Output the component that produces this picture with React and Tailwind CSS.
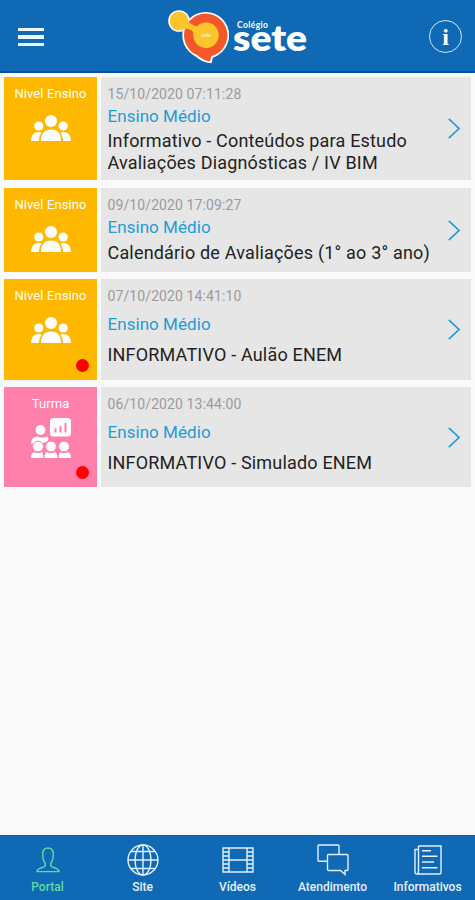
import { useState } from 'react';

const notices = [
  {
    id: 1,
    kind: 'Nivel Ensino',
    date: '15/10/2020 07:11:28',
    group: 'Ensino Médio',
    title: ['Informativo - Conteúdos para Estudo', 'Avaliações Diagnósticas / IV BIM'],
    unread: false,
    size: 'h-[103px] mb-2',
    groupGap: 'mt-[4px]',
    titleGap: 'mt-[4px]',
  },
  {
    id: 2,
    kind: 'Nivel Ensino',
    date: '09/10/2020 17:09:27',
    group: 'Ensino Médio',
    title: ['Calendário de Avaliações (1° ao 3° ano)'],
    unread: false,
    size: 'h-[84px] mb-[7px]',
    groupGap: 'mt-[4px]',
    titleGap: 'mt-[5px]',
  },
  {
    id: 3,
    kind: 'Nivel Ensino',
    date: '07/10/2020 14:41:10',
    group: 'Ensino Médio',
    title: ['INFORMATIVO - Aulão ENEM'],
    unread: true,
    size: 'h-[101px] mb-[7px]',
    groupGap: 'mt-[10px]',
    titleGap: 'mt-[10px]',
  },
  {
    id: 4,
    kind: 'Turma',
    date: '06/10/2020 13:44:00',
    group: 'Ensino Médio',
    title: ['INFORMATIVO - Simulado ENEM'],
    unread: true,
    size: 'h-[100px]',
    groupGap: 'mt-[10px]',
    titleGap: 'mt-[10px]',
  },
];

function Logo() {
  return (
    <svg width="142" height="60" viewBox="0 0 142 60">
      {/* white outline behind the whole shape */}
      <g fill="#fff">
        <circle cx="11" cy="13" r="10.8" />
        <circle cx="37.7" cy="27.3" r="23.4" />
        <path d="M28 47 L45.5 47.5 L43.5 55.3 Q33 54.5 26 47Z" />
      </g>
      <circle cx="37.7" cy="27.3" r="21.7" fill="#f4582a" />
      <path d="M29 46.5 L43.5 47 L42 53.6 Q34.5 52.5 29 46.5Z" fill="#f4582a" />
      {/* neck joining the two yellow circles */}
      <path d="M17 8.5 Q20 15 27 18 Q31 19 35 16 L28 33 Q27 25 23 22 Q19 20 12 21Z" fill="#fdc52c" />
      <circle cx="11" cy="13" r="9.4" fill="#fdc52c" />
      <circle cx="38" cy="27.3" r="12.7" fill="#fdc52c" />
      <text x="33" y="29" fontSize="5" fontWeight="700" fill="#fff3b0" textLength="10" className="font-['Roboto',sans-serif]">
        sete
      </text>
      <text x="69" y="20" fontSize="8.5" fontWeight="700" fill="#fff" textLength="31" className="font-['Lato',sans-serif]">
        Colégio
      </text>
      <text x="65" y="43" fontSize="36.5" fontWeight="800" fill="#fff" textLength="74" lengthAdjust="spacingAndGlyphs" className="font-['Lato',sans-serif]">
        sete
      </text>
    </svg>
  );
}

function GroupIcon() {
  return (
    <svg width="40" height="26" viewBox="0 0 40 26" fill="#fff">
      <circle cx="20" cy="6" r="6" />
      <circle cx="7.8" cy="11" r="4.6" />
      <circle cx="32.2" cy="11" r="4.6" />
      <path d="M10 26 Q10 14.5 20 14.5 Q30 14.5 30 26Z" />
      <path d="M0 26 Q.3 17 7.8 17 Q9.4 17 10.5 17.5 Q8 21 7.8 26Z" />
      <path d="M40 26 Q39.7 17 32.2 17 Q30.6 17 29.5 17.5 Q32 21 32.2 26Z" />
    </svg>
  );
}

function ClassIcon() {
  return (
    <svg width="40" height="40" viewBox="0 0 40 40" fill="#fff">
      <rect x="19" y="0" width="21" height="18.5" rx="3.5" />
      <path d="M24.5 10.5v4M29.5 8v6.5M34.5 5v9.5" stroke="#ff80ab" strokeWidth="2" />
      <circle cx="9.5" cy="12" r="4.9" />
      <path d="M0 26 Q0 19 6 18.5 Q12 20.5 16.5 18.5 Q18.5 21 16 23.5 L12 25 H3Z" />
      <g stroke="#ff80ab" strokeWidth="1">
        <circle cx="7" cy="28.5" r="5.4" />
        <circle cx="20" cy="28.5" r="5.4" />
        <circle cx="33" cy="28.5" r="5.4" />
      </g>
      <path d="M0 40 Q0 35 3 34 Q7 36.5 11 34 Q12.2 35 12.2 40Z" />
      <path d="M13.4 40 Q13.5 35 16 34 Q20 36.5 24 34 Q26.4 35 26.6 40Z" />
      <path d="M27.8 40 Q27.8 35 29 34 Q33 36.5 37 34 Q40 35 40 40Z" />
    </svg>
  );
}

function PersonIcon() {
  return (
    <svg width="24" height="26" viewBox="0 0 24 26" fill="none" stroke="currentColor" strokeWidth="1.4">
      <path d="M9.3 16.5 Q6.6 13 6.7 7 Q6.8 1 12 1 Q17.2 1 17.3 7 Q17.4 13 14.7 16.5 V18.5 Q15.2 20 20 21.3 Q23 22.3 23 24.6 H1 Q1 22.3 4 21.3 Q8.8 20 9.3 18.5Z" />
    </svg>
  );
}

function GlobeIcon() {
  return (
    <svg width="32" height="32" viewBox="0 0 32 32" fill="none" stroke="currentColor" strokeWidth="1.4">
      <circle cx="16" cy="16" r="15" />
      <ellipse cx="16" cy="16" rx="8" ry="15" />
      <path d="M16 1v30M1 16h30M4 7.5h24M4 24.5h24" />
    </svg>
  );
}

function FilmIcon() {
  return (
    <svg width="32" height="26" viewBox="0 0 32 26" fill="none" stroke="currentColor" strokeWidth="1.4">
      <path d="M1 1h30v24H1zM7 1v24M25 1v24M7 13h18" />
      <path d="M1 5h6M1 9h6M1 13h6M1 17h6M1 21h6M25 5h6M25 9h6M25 13h6M25 17h6M25 21h6" />
    </svg>
  );
}

function ChatIcon() {
  return (
    <svg width="32" height="32" viewBox="0 0 32 32" fill="none" stroke="currentColor" strokeWidth="1.4">
      <path d="M10 17.3H2Q1 17.3 1 16.3V2Q1 1 2 1H21Q22 1 22 2V10" />
      <path d="M11.5 10.5H30Q31 10.5 31 11.5V25.5Q31 26.5 30 26.5H28V30.5L23.5 26.5H11.5Q10.5 26.5 10.5 25.5V11.5Q10.5 10.5 11.5 10.5Z" />
    </svg>
  );
}

function NewsIcon() {
  return (
    <svg width="28" height="30" viewBox="0 0 28 30" fill="none" stroke="currentColor" strokeWidth="1.4">
      <path d="M4.5 1h22.5v26.5Q27 29 25.5 29H3Q1 29 1 27V4.5H4.5M4.5 1V26.5Q4.5 29 2.8 29" />
      <path d="M8 5.8h9M8 11.3h15.5M8 17h12M8 22.8h15.5" />
    </svg>
  );
}

const tabs = [
  { label: 'Portal', icon: PersonIcon },
  { label: 'Site', icon: GlobeIcon },
  { label: 'Vídeos', icon: FilmIcon },
  { label: 'Atendimento', icon: ChatIcon },
  { label: 'Informativos', icon: NewsIcon },
];

function NoticeCard({ notice }) {
  const isClass = notice.kind === 'Turma';

  return (
    <li className={`flex gap-[4px] ${notice.size}`}>
      <div className={`relative w-[93px] shrink-0 flex flex-col items-center pt-[9px] ${isClass ? 'bg-[#ff80ab]' : 'bg-[#ffb800]'}`}>
        <span className="h-4 text-[13px] leading-4 tracking-[0.1px] text-white whitespace-nowrap">{notice.kind}</span>
        <div className={isClass ? 'mt-[6px]' : 'mt-[13px]'}>
          {isClass ? <ClassIcon /> : <GroupIcon />}
        </div>
        {notice.unread && <span className="absolute right-[8px] bottom-[8px] size-[13px] rounded-full bg-[#ff0000]" />}
      </div>
      <button className="flex-1 flex items-center justify-between bg-[#e6e6e6] pl-[6.5px] pr-[11px] text-left">
        <div className="self-start pt-[9px] whitespace-nowrap">
          <p className="text-[14px] leading-4 tracking-[0.1px] text-[#9b9b9b]">{notice.date}</p>
          <p className={`text-[17px] leading-5 tracking-[0.05px] text-[#219cd8] ${notice.groupGap}`}>{notice.group}</p>
          <p className={`text-[18px] leading-[21.5px] tracking-[0.18px] text-[#222] ${notice.titleGap}`}>
            {notice.title.map((line) => (
              <span key={line} className="block">{line}</span>
            ))}
          </p>
        </div>
        <svg width="12" height="21" viewBox="0 0 12 21" fill="none" stroke="#219cd8" strokeWidth="1.7">
          <path d="M.8.8 L11 10.5 L.8 20.2" />
        </svg>
      </button>
    </li>
  );
}

export default function App() {
  const [active, setActive] = useState('Portal');

  return (
    <div className="h-[900px] w-full flex flex-col bg-[#fafafa] font-['Roboto',sans-serif]">
      <header className="h-[73px] shrink-0 flex items-center justify-between bg-[#0f69b4] border-b-2 border-[#07539b] pl-[18px] pr-[13px] text-white">
        <button className="flex flex-col gap-[4px] pt-[3px]">
          <span className="block h-[3.5px] w-[26px] bg-[#eef7ff]" />
          <span className="block h-[3.5px] w-[26px] bg-[#eef7ff]" />
          <span className="block h-[3.5px] w-[26px] bg-[#eef7ff]" />
        </button>
        <div className="pt-[5px] pl-[4px]">
          <Logo />
        </div>
        <button className="mt-[2px] size-[33px] rounded-full border-[1.5px] border-[#d5ebfb] flex items-center justify-center">
          <span className="font-['Liberation_Serif',serif] font-bold text-[24px] leading-[30px]">i</span>
        </button>
      </header>

      <ul className="flex-1 px-[4px] pt-[4px]">
        {notices.map((notice) => (
          <NoticeCard key={notice.id} notice={notice} />
        ))}
      </ul>

      <nav className="h-[65px] shrink-0 grid grid-cols-5 bg-[#0f69b4] border-t border-[#0a5da6]">
        {tabs.map(({ label, icon: Icon }) => (
          <button
            key={label}
            onClick={() => setActive(label)}
            className={`flex flex-col items-center pt-[8px] ${active === label ? 'text-[#62dba2]' : 'text-[#e3f1fc]'}`}
          >
            <span className="h-8 flex items-center">
              <Icon />
            </span>
            <span className="mt-[3px] text-[12px] leading-4 font-medium whitespace-nowrap">{label}</span>
          </button>
        ))}
      </nav>
    </div>
  );
}
